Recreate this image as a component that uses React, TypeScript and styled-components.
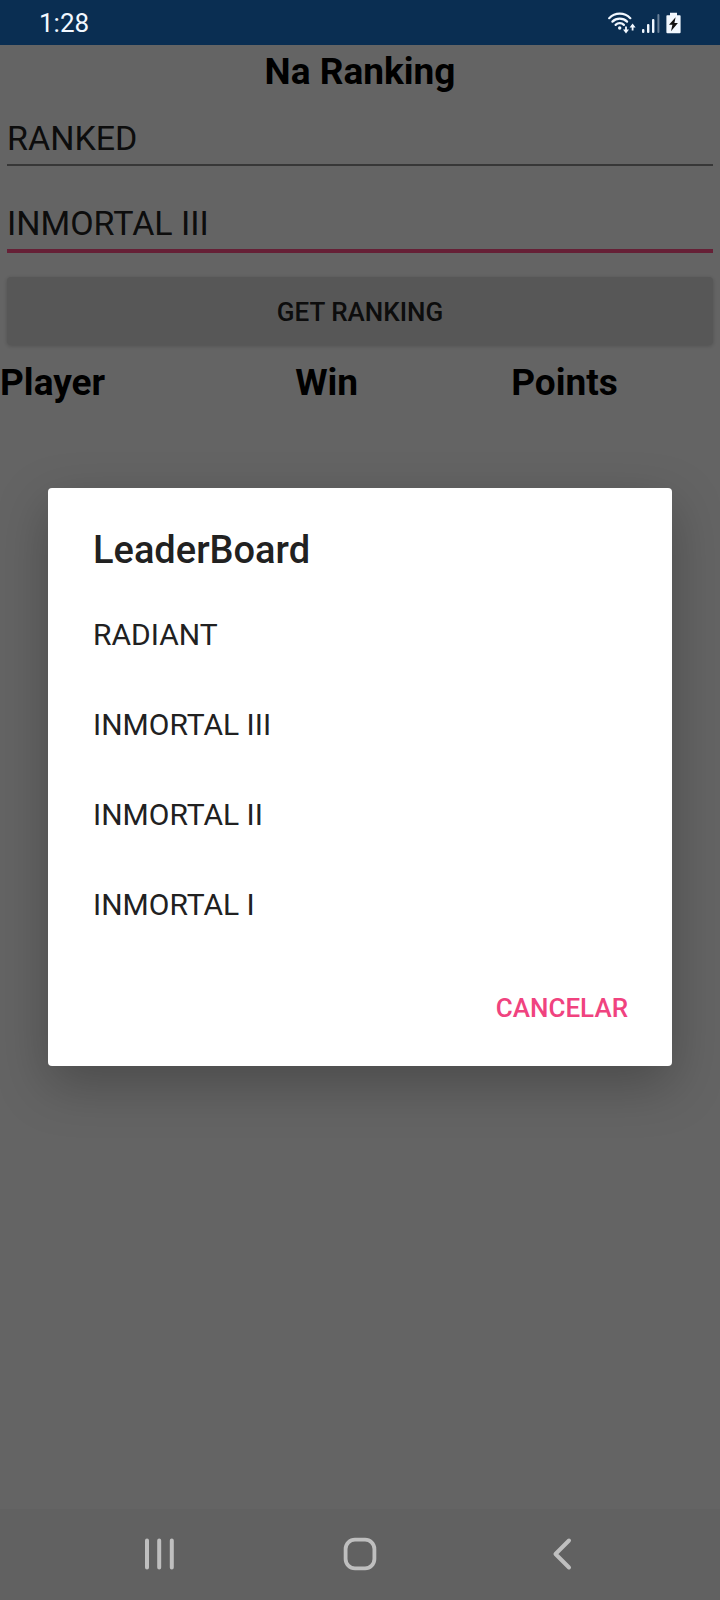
import React, { useState } from "react";
import styled, { createGlobalStyle } from "styled-components";

const GlobalStyle = createGlobalStyle`
  *, *::before, *::after { box-sizing: border-box; }
  body { margin: 0; background: #646464; font-family: Roboto, "Liberation Sans", sans-serif; }
  button, input { font-family: inherit; }
`;

const Screen = styled.div`
  display: flex;
  flex-direction: column;
  min-height: 100vh;
`;

const StatusBar = styled.header`
  display: flex;
  align-items: center;
  justify-content: space-between;
  height: 45px;
  padding: 0 39px;
  background: #0a2e52;
  color: #f2f8ff;
`;

const Clock = styled.time`
  font-size: 26px;
  line-height: 32px;
`;

const StatusIcons = styled.div`
  display: flex;
  align-items: center;
  gap: 6px;
`;

const Content = styled.main`
  position: relative;
  flex: 1;
  background: #fafafa;
`;

const PageTitle = styled.h1`
  margin: 0;
  font-size: 37px;
  line-height: 54px;
  font-weight: 700;
  text-align: center;
  color: #000;
`;

const Fields = styled.form`
  display: flex;
  flex-direction: column;
  padding: 19px 7px 16px;
`;

const Field = styled.input<{ $active?: boolean }>`
  width: 100%;
  height: ${(p) => (p.$active ? 50 : 48)}px;
  margin: 0 0 ${(p) => (p.$active ? 24 : 37)}px;
  padding: 0 0 6px;
  border: 0;
  border-bottom: ${(p) => (p.$active ? "4px solid #ff5088" : "2px solid #8a8a8a")};
  border-radius: 0;
  outline: none;
  background: transparent;
  color: #212121;
  font-size: 34px;
  line-height: 40px;
`;

const RankingButton = styled.button`
  height: 68px;
  padding: 2px 0 0;
  border: 0;
  border-radius: 4px;
  background: #d9d9d9;
  box-shadow: 0 1px 4px rgba(0, 0, 0, 0.2);
  color: #212121;
  font-size: 26px;
  font-weight: 500;
`;

const Table = styled.table`
  width: 100%;
  table-layout: fixed;
  border-collapse: collapse;
`;

const HeadCell = styled.th<{ $width: string }>`
  width: ${(p) => p.$width};
  padding: 0;
  font-size: 37px;
  line-height: 44px;
  font-weight: 700;
  text-align: left;
  color: #000;
`;

const Scrim = styled.div`
  position: absolute;
  inset: 0;
  display: flex;
  align-items: center;
  justify-content: center;
  padding: 0 48px;
  background: rgba(0, 0, 0, 0.6);
`;

const Dialog = styled.section`
  width: 100%;
  border-radius: 4px;
  background: #fff;
  box-shadow: 0 18px 52px rgba(0, 0, 0, 0.26);
`;

const DialogTitle = styled.h2`
  margin: 0;
  padding: 40px 45px 17px;
  font-size: 38px;
  line-height: 44px;
  font-weight: 500;
  color: #212121;
`;

const Options = styled.ul`
  margin: 0;
  padding: 0;
  list-style: none;
`;

const Option = styled.button`
  display: block;
  width: 100%;
  height: 90px;
  padding: 0 45px;
  border: 0;
  background: transparent;
  color: #212121;
  font-size: 30px;
  text-align: left;
`;

const Actions = styled.footer`
  display: flex;
  justify-content: flex-end;
  padding: 25px 28px 24px;
`;

const CancelButton = styled.button`
  height: 68px;
  padding: 0 16px;
  border: 0;
  background: transparent;
  color: #f0437f;
  font-size: 26px;
  font-weight: 500;
`;

const NavBar = styled.nav`
  display: flex;
  height: 91px;
  padding: 0 8%;
  background: #616161;
`;

const NavButton = styled.button`
  display: flex;
  flex: 1;
  align-items: center;
  justify-content: center;
  padding: 0 0 2px;
  border: 0;
  background: transparent;
  color: #bfbfbf;
`;

const WifiIcon = () => (
  <svg width="28" height="22" viewBox="0 0 28 22" fill="none" stroke="currentColor" aria-hidden="true">
    <path d="M1.2 6.2C7 .2 16.5.2 22.3 6.2" strokeWidth="2.2" strokeLinecap="round" />
    <path d="M4.4 9.6C8.4 5.6 15.1 5.6 19.1 9.6" strokeWidth="2.2" strokeLinecap="round" />
    <path d="M7.6 12.9C9.9 10.6 13.6 10.6 15.9 12.9" strokeWidth="2.2" strokeLinecap="round" />
    <circle cx="11.7" cy="16" r="1.7" fill="currentColor" stroke="none" />
    <path d="M18 14.5v5.4M24.6 18.5v-5.4" strokeWidth="1.8" />
    <path d="M15 17.6h6L18 21.4zM21.6 15.4h6l-3-3.8z" fill="currentColor" stroke="none" />
  </svg>
);

const SignalIcon = () => (
  <svg width="18" height="22" viewBox="0 0 18 22" fill="currentColor" aria-hidden="true">
    <rect x="0" y="17" width="2.4" height="4" rx="1" />
    <rect x="5" y="12" width="2.4" height="9" rx="1" />
    <rect x="10" y="7" width="2.4" height="14" rx="1" />
    <rect x="15.4" y="2" width="2" height="19" rx="1" opacity=".4" />
  </svg>
);

const BatteryIcon = () => (
  <svg width="15" height="22" viewBox="0 0 15 22" aria-hidden="true">
    <path d="M4 .8h7v2.4h2.8a.8.8 0 0 1 .8.8v16.2a1 1 0 0 1-1 1H1.4a1 1 0 0 1-1-1V4a.8.8 0 0 1 .8-.8H4z" fill="currentColor" />
    <path d="M9.6 5.2 3 12.8h3.4l-1.4 6.4 6.9-8.2H8.4z" fill="#111" />
  </svg>
);

const RecentsIcon = () => (
  <svg width="34" height="34" viewBox="0 0 34 34" stroke="currentColor" strokeWidth="4" strokeLinecap="round" aria-hidden="true">
    <path d="M6 3.5v27M18.2 3.5v27M30.8 3.5v27" />
  </svg>
);

const HomeIcon = () => (
  <svg width="34" height="34" viewBox="0 0 34 34" fill="none" stroke="currentColor" strokeWidth="3.8" aria-hidden="true">
    <rect x="2.6" y="2.6" width="28.8" height="28.8" rx="9.4" />
  </svg>
);

const BackIcon = () => (
  <svg width="34" height="34" viewBox="0 0 34 34" fill="none" stroke="currentColor" strokeWidth="4" strokeLinecap="round" strokeLinejoin="round" aria-hidden="true">
    <path d="M24 3.5 10.5 17 24 30.5" />
  </svg>
);

const RANKS = ["RADIANT", "INMORTAL III", "INMORTAL II", "INMORTAL I"];

export default function App() {
  const [mode, setMode] = useState("RANKED");
  const [rank, setRank] = useState("INMORTAL III");
  const [open, setOpen] = useState(true);

  const choose = (value: string) => {
    setRank(value);
    setOpen(false);
  };

  return (
    <>
      <GlobalStyle />
      <Screen>
        <StatusBar>
          <Clock>1:28</Clock>
          <StatusIcons>
            <WifiIcon />
            <SignalIcon />
            <BatteryIcon />
          </StatusIcons>
        </StatusBar>

        <Content>
          <PageTitle>Na Ranking</PageTitle>
          <Fields onSubmit={(e) => e.preventDefault()}>
            <Field type="text" aria-label="Mode" value={mode} onChange={(e) => setMode(e.target.value)} />
            <Field
              $active
              type="text"
              aria-label="Rank"
              value={rank}
              onChange={(e) => setRank(e.target.value)}
              onClick={() => setOpen(true)}
            />
            <RankingButton type="submit">GET RANKING</RankingButton>
          </Fields>
          <Table>
            <thead>
              <tr>
                <HeadCell scope="col" $width="41%">Player</HeadCell>
                <HeadCell scope="col" $width="30%">Win</HeadCell>
                <HeadCell scope="col" $width="29%">Points</HeadCell>
              </tr>
            </thead>
          </Table>

          {open && (
            <Scrim>
              <Dialog role="dialog" aria-modal="true" aria-labelledby="dialog-title">
                <DialogTitle id="dialog-title">LeaderBoard</DialogTitle>
                <Options>
                  {RANKS.map((r) => (
                    <li key={r}>
                      <Option type="button" onClick={() => choose(r)}>{r}</Option>
                    </li>
                  ))}
                </Options>
                <Actions>
                  <CancelButton type="button" onClick={() => setOpen(false)}>CANCELAR</CancelButton>
                </Actions>
              </Dialog>
            </Scrim>
          )}
        </Content>

        <NavBar>
          <NavButton type="button" aria-label="Recent apps"><RecentsIcon /></NavButton>
          <NavButton type="button" aria-label="Home"><HomeIcon /></NavButton>
          <NavButton type="button" aria-label="Back"><BackIcon /></NavButton>
        </NavBar>
      </Screen>
    </>
  );
}
